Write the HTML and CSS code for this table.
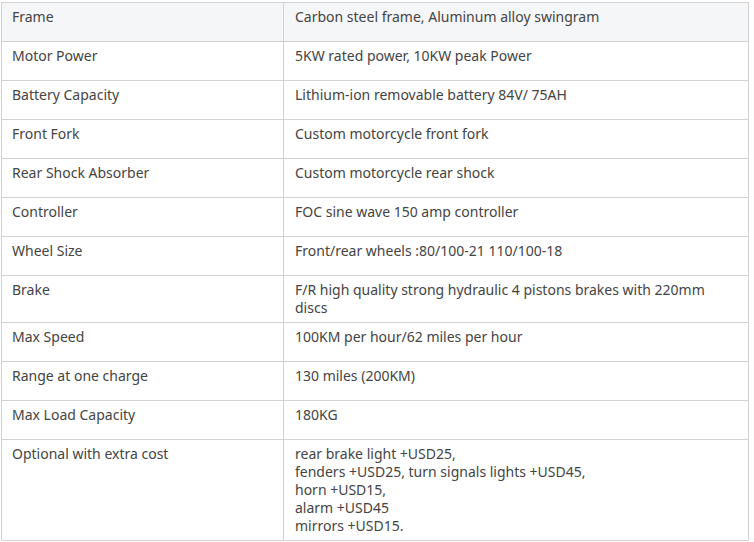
FILE: index.html
```html
<!DOCTYPE html>
<html>
<head>
<meta charset="utf-8">
<link rel="stylesheet" href="styles.css">
</head>
<body>
<div class="wrap">
<table class="spec">
<colgroup><col class="c1"><col class="c2"></colgroup>
<tbody>
<tr class="head"><td>Frame</td><td>Carbon steel frame, Aluminum alloy swingram</td></tr>
<tr><td>Motor Power</td><td>5KW rated power, 10KW peak Power</td></tr>
<tr><td>Battery Capacity</td><td>Lithium-ion removable battery 84V/ 75AH</td></tr>
<tr><td>Front Fork</td><td>Custom motorcycle front fork</td></tr>
<tr><td>Rear Shock Absorber</td><td>Custom motorcycle rear shock</td></tr>
<tr><td>Controller</td><td>FOC sine wave 150 amp controller</td></tr>
<tr><td>Wheel Size</td><td>Front/rear wheels :80/100-21 110/100-18</td></tr>
<tr><td>Brake</td><td>F/R high quality strong hydraulic 4 pistons brakes with 220mm discs</td></tr>
<tr><td>Max Speed</td><td>100KM per hour/62 miles per hour</td></tr>
<tr><td>Range at one charge</td><td>130 miles (200KM)</td></tr>
<tr><td>Max Load Capacity</td><td>180KG</td></tr>
<tr><td>Optional with extra cost</td><td>rear brake light +USD25,<br>fenders +USD25, turn signals lights +USD45,<br>horn +USD15,<br>alarm +USD45<br>mirrors +USD15.</td></tr>
</tbody>
</table>
</div>
</body>
</html>
```
FILE: styles.css
```css
html, body {
  margin: 0;
  padding: 0;
  background: #fff;
}
.wrap {
  padding: 2px 0 0 1px;
}
.spec {
  border-collapse: collapse;
  width: 748px;
  table-layout: fixed;
  font-family: "Noto Sans", "Open Sans", sans-serif;
  font-size: 14px;
  line-height: 18px;
  color: #444;
}
.c1 { width: 282px; }
.spec td {
  border: 1px solid #d2d2d2;
  padding: 5px 10px 5px 10px;
  vertical-align: top;
  height: 28px;
  box-sizing: content-box;
}
.spec td + td {
  padding-left: 11px;
}
.spec tr.head td {
  background: #f5f6f7;
}
```
